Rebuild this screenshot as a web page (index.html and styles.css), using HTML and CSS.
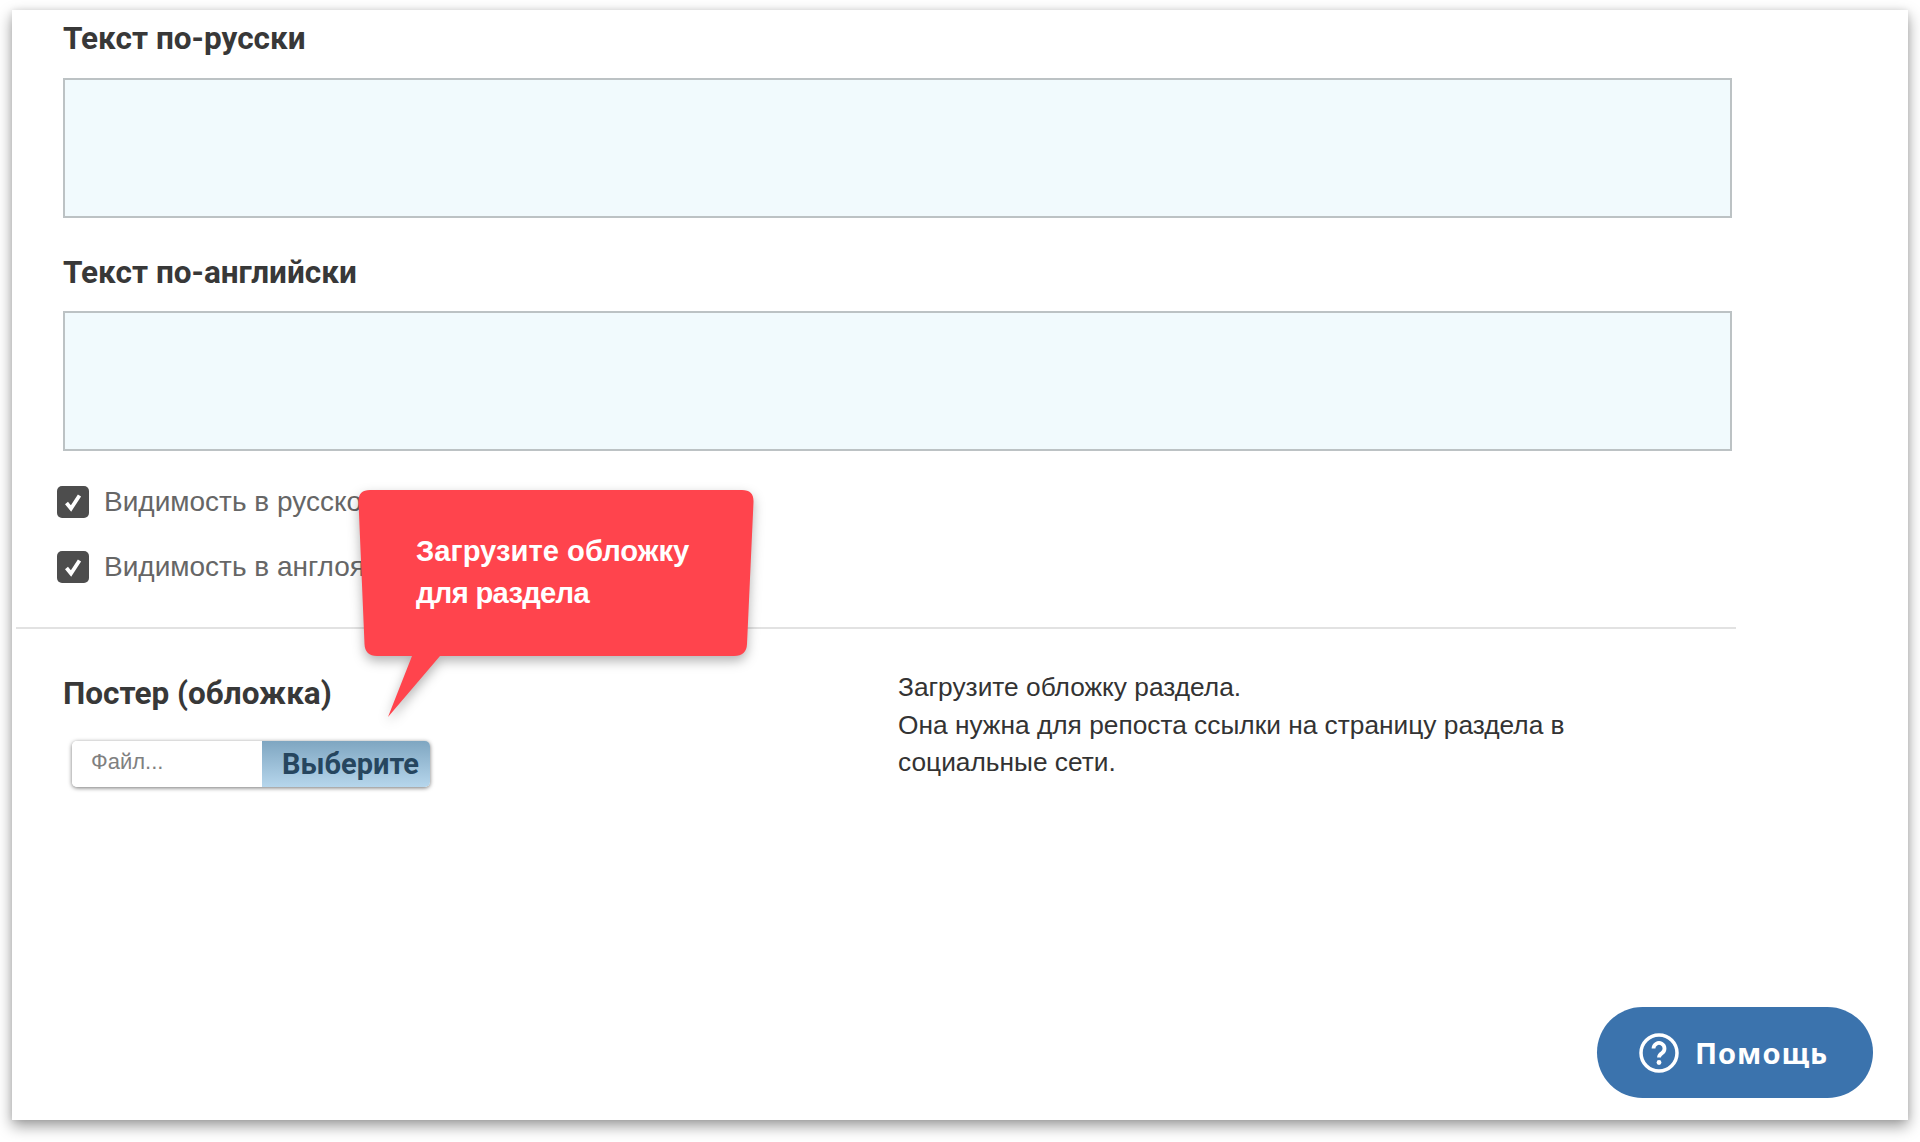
FILE: index.html
```html
<!DOCTYPE html>
<html lang="ru">
<head>
<meta charset="utf-8">
<title>Раздел</title>
<link rel="stylesheet" href="styles.css">
</head>
<body>
<main class="window">
  <section class="fields">
    <h2 class="heading first">Текст по-русски</h2>
    <div class="area"></div>
    <h2 class="heading second">Текст по-английски</h2>
    <div class="area second-area"></div>
    <ul class="checks">
      <li class="check">
        <svg class="box" viewBox="0 0 32 32"><rect width="32" height="32" rx="5" fill="#4d4d4d"/><path d="M9.5 17l4.5 5.5L22.500 9.500" fill="none" stroke="#fff" stroke-width="3.800"/></svg>
        <span>Видимость в русскоязычной версии</span>
      </li>
      <li class="check">
        <svg class="box" viewBox="0 0 32 32"><rect width="32" height="32" rx="5" fill="#4d4d4d"/><path d="M9.5 17l4.5 5.5L22.500 9.500" fill="none" stroke="#fff" stroke-width="3.800"/></svg>
        <span>Видимость в англоязычной версии</span>
      </li>
    </ul>
  </section>
  <section class="poster">
    <div class="poster-left">
      <h2 class="heading">Постер (обложка)</h2>
      <div class="file">
        <span class="file-name">Файл...</span>
        <span class="file-btn">Выберите</span>
      </div>
    </div>
    <p class="poster-note">Загрузите обложку раздела.<br>Она нужна для репоста ссылки на страницу раздела в социальные сети.</p>
  </section>

  <aside class="tip">
    <svg class="tip-shape" viewBox="0 0 396 228"><path d="M12 0H384Q396 0 395.500 12L389 154Q388.500 166 376 166H82L30 227L54 166H19Q7 166 6.500 154L.5 12Q0 0 12 0Z" fill="#ff444d"/></svg>
    <p class="tip-text">Загрузите обложку<br><span class="tip-line">для раздела</span></p>
  </aside>

  <button class="help" type="button">
    <svg class="help-icon" viewBox="0 0 40 40"><circle cx="20" cy="20" r="18" fill="none" stroke="#fff" stroke-width="3.500"/><path d="M14.500 15.500a5.500 5.500 0 1 1 8.500 4.600c-2 1.300-3 2.200-3 4.400" fill="none" stroke="#fff" stroke-width="3.800"/><circle cx="20" cy="29.500" r="2.400" fill="#fff"/></svg>
    <span>Помощь</span>
  </button>
</main>
</body>
</html>
```
FILE: styles.css
```css
* { box-sizing: border-box; }
html, body { height: 100%; }
body {
  margin: 0;
  padding: 10px 12px 22px;
  background: #fff;
  font-family: "Liberation Sans", Arial, sans-serif;
  overflow: hidden;
}
.window {
  position: relative;
  height: 1110px;
  background: #fff;
  box-shadow: 0 6px 14px rgba(0, 0, 0, .4), 0 0 6px rgba(0, 0, 0, .08);
}
.fields {
  width: 1720px;
  height: 619px;
  border-bottom: 2px solid #e2e2e2;
  margin-left: 4px;
  padding-left: 47px;
}
.heading {
  margin: 0;
  font: 700 31.500px/40px Roboto, Arial, sans-serif;
  color: #383838;
}
.heading.first { padding-top: 9px; }
.heading.second { margin-top: 35px; }
.area {
  width: 1669px;
  height: 140px;
  margin-top: 19px;
  background: #f1fafd;
  border: 2px solid #bcc2c4;
}
.second-area { margin-top: 18px; }
.checks {
  list-style: none;
  margin: 35px 0 0 -6px;
  padding: 0;
  display: flex;
  flex-direction: column;
  gap: 33px;
}
.check {
  display: flex;
  align-items: center;
  gap: 15px;
  font-size: 28px;
  line-height: 32px;
  white-space: nowrap;
  color: #666;
}
.box { width: 32px; height: 32px; flex: none; }
.poster {
  display: grid;
  grid-template-columns: 835px 670px;
  padding: 43px 0 0 51px;
}
.poster-left .heading { line-height: 44px; }
.file {
  display: flex;
  width: 358px;
  height: 46px;
  margin: 25px 0 0 9px;
  border-radius: 5px;
  overflow: hidden;
  box-shadow: 0 1px 4px rgba(0, 0, 0, .55);
}
.file-name {
  flex: 1;
  padding-left: 19px;
  font-size: 22px;
  line-height: 42px;
  color: #808080;
  background: #fff;
}
.file-btn {
  width: 168px;
  padding-left: 20px;
  font: 700 29px/46px Roboto, Arial, sans-serif;
  color: #26465f;
  background: linear-gradient(#7fa6c1, #b6d6ec);
}
.poster-note {
  margin: -3px 0 0;
  font-size: 26.300px;
  line-height: 37.500px;
  color: #333;
}
.tip {
  position: absolute;
  left: 346px;
  top: 480px;
  width: 396px;
  height: 228px;
  padding: 41px 0 0 58px;
}
.tip-shape {
  position: absolute;
  inset: 0;
  width: 396px;
  height: 228px;
  overflow: visible;
  filter: drop-shadow(0 5px 6px rgba(0, 0, 0, .3));
}
.tip-text {
  position: relative;
  margin: 0;
  font-size: 29.200px;
  font-weight: 700;
  line-height: 41.500px;
  color: #fff;
}
.tip-line { letter-spacing: -.7px; }
.help {
  position: absolute;
  left: 1585px;
  top: 997px;
  width: 276px;
  height: 91px;
  padding: 0 0 0 42px;
  display: flex;
  align-items: center;
  gap: 16px;
  border: 0;
  border-radius: 46px;
  background: #3b73ad;
  color: #fff;
  font: 700 29px "Noto Sans", Arial, sans-serif;
  letter-spacing: 1px;
}
.help-icon { width: 40px; height: 40px; flex: none; }
```
